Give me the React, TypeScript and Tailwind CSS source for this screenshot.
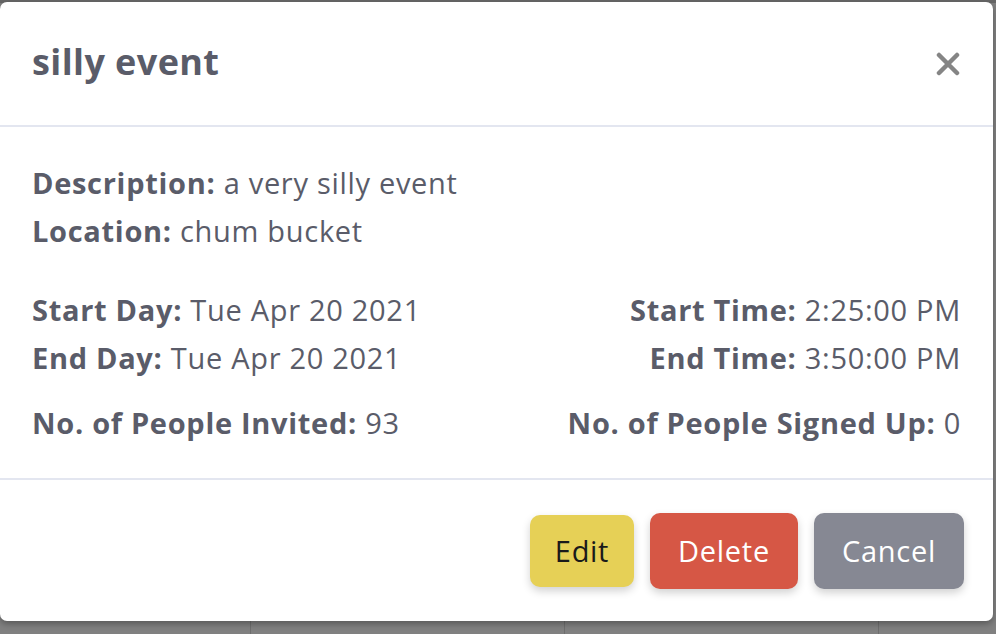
import React from "react";

const font = { fontFamily: "'Open Sans', 'Noto Sans', sans-serif" };

function Row({ label, value }: { label: string; value: string }) {
  return (
    <div>
      <span className="font-bold">{label}</span> {value}
    </div>
  );
}

export default function App() {
  return (
    <div
      className="relative w-[996px] h-[634px] overflow-hidden bg-[#808080]"
      style={font}
    >
      {/* calendar behind the backdrop */}
      <div className="flex h-full flex-col">
        <div className="h-[3px] bg-[#666666]" />
        <div className="flex flex-1">
          <div className="w-[251px] border-r border-[#6e6e6e]" />
          <div className="w-[314px] border-r border-[#6e6e6e]" />
          <div className="w-[314px] border-r border-[#6e6e6e]" />
          <div className="flex-1" />
        </div>
      </div>

      {/* modal */}
      <div className="absolute left-0 top-[2px] flex h-[619px] w-[993px] flex-col rounded-[7px] bg-white text-[#5a5c69] shadow-[0_3px_6px_rgba(0,0,0,0.3)]">
        <div className="flex h-[125px] items-center justify-between border-b-2 border-[#e3e6f0] pl-8 pr-[33px]">
          <h1 className="mb-[3px] text-[36px] font-bold leading-none tracking-[0.4px]">
            silly event
          </h1>
          <svg width="24" height="24" viewBox="0 0 24 24" className="text-[#858585]">
            <path
              d="M3 3 L21 21 M21 3 L3 21"
              stroke="currentColor"
              strokeWidth="4.5"
              strokeLinecap="round"
            />
          </svg>
        </div>

        <div className="flex flex-col border-b-2 border-[#e3e6f0] px-8 pt-[32px] pb-[31px] text-[29px] leading-[48px] tracking-[0.7px]">
          <Row label="Description:" value="a very silly event" />
          <Row label="Location:" value="chum bucket" />
          <div className="mt-[31px] flex justify-between">
            <Row label="Start Day:" value="Tue Apr 20 2021" />
            <Row label="Start Time:" value="2:25:00 PM" />
          </div>
          <div className="flex justify-between">
            <Row label="End Day:" value="Tue Apr 20 2021" />
            <Row label="End Time:" value="3:50:00 PM" />
          </div>
          <div className="mt-[17px] flex justify-between">
            <Row label="No. of People Invited:" value="93" />
            <Row label="No. of People Signed Up:" value="0" />
          </div>
        </div>

        <div className="flex flex-1 items-center justify-end gap-4 pr-[29px] text-[29px] tracking-[0.7px]">
          <button className="h-[72px] w-[104px] rounded-[10px] bg-[#e6d056] text-[#1a1a1a] shadow-[0_4px_8px_rgba(0,0,0,0.18)]">
            Edit
          </button>
          <button className="h-[76px] w-[148px] rounded-[10px] bg-[#d65745] text-white shadow-[0_4px_8px_rgba(0,0,0,0.18)]">
            Delete
          </button>
          <button className="h-[76px] w-[150px] rounded-[10px] bg-[#868893] text-white shadow-[0_4px_8px_rgba(0,0,0,0.18)]">
            Cancel
          </button>
        </div>
      </div>
    </div>
  );
}
